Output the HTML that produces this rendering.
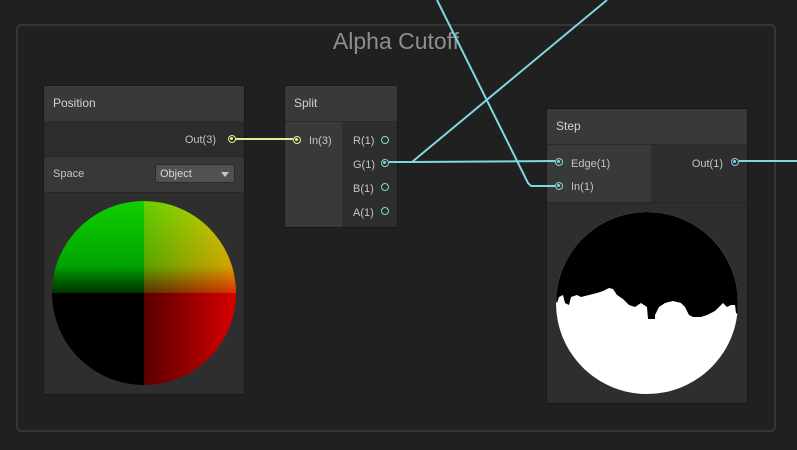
<!DOCTYPE html>
<html><head><style>
*{margin:0;padding:0;box-sizing:border-box}
body{width:797px;height:450px;background:#1f1f1f;position:relative;overflow:hidden;font-family:"Liberation Sans","DejaVu Sans",sans-serif;color:#c4c4c4;font-size:11px}
.abs{position:absolute}
.grp{left:16px;top:24px;width:760px;height:408px;border:2px solid #353535;border-radius:6px;background:#202020}
.title{left:16px;width:760px;top:28px;text-align:center;font-size:23px;color:#8e8e8e}
.hdr{background:#393939;border-bottom:1px solid #2a2a2a;font-size:12px;color:#d2d2d2;padding:10px 0 0 9px}
.port{width:8px;height:8px;border-radius:50%;border:1.5px solid #7fd8e0}
.pf::after{content:"";position:absolute;left:1px;top:1px;width:3px;height:3px;border-radius:50%;background:#7fd8e0}
.py{border-color:#e9ec94}.py::after{background:#e9ec94}
</style></head><body>
<div class="abs grp"></div>
<div class="abs title">Alpha Cutoff</div>

<div class="abs" style="left:44px;top:86px;width:200px;height:308px;background:#2e2e2e;box-shadow:0 0 0 1px #191919">
 <div class="abs hdr" style="left:0;top:0;width:200px;height:36px">Position</div>
 <div class="abs" style="left:0;top:36px;width:200px;height:34px;background:#2c2c2c"></div>
 <div class="abs" style="right:28px;top:48px">Out(3)</div>
 <div class="abs port pf py" style="left:184px;top:49px"></div>
 <div class="abs" style="left:0;top:70px;width:200px;height:37px;background:#383838;border-top:1px solid #262626;border-bottom:1px solid #262626"></div>
 <div class="abs" style="left:9px;top:82px">Space</div>
 <div class="abs" style="left:111px;top:78px;width:80px;height:19px;background:#515151;border-radius:3px;border:1px solid #2a2a2a;padding:3px 0 0 4px;color:#d8d8d8;font-size:11px">Object<span class="abs" style="right:5px;top:7px;width:0;height:0;border-left:4px solid transparent;border-right:4px solid transparent;border-top:5px solid #c8c8c8"></span></div>
 <svg class="abs" style="left:8px;top:115px" width="184" height="184">
  <defs>
   <clipPath id="c1"><circle cx="92" cy="92" r="92"/></clipPath>
   <linearGradient id="gr" x1="0" x2="1"><stop offset="0" stop-color="#580000"/><stop offset="1" stop-color="#d80000"/></linearGradient>
   <linearGradient id="gg" x1="0" x2="0" y1="0" y2="1"><stop offset="0" stop-color="#10d000"/><stop offset="0.7" stop-color="#00a400"/><stop offset="1" stop-color="#003000"/></linearGradient>
  </defs>
  <g clip-path="url(#c1)">
   <rect width="184" height="184" fill="#000"/>
   <rect x="92" y="0" width="92" height="184" fill="url(#gr)"/>
   <rect x="0" y="0" width="184" height="92" fill="url(#gg)" style="mix-blend-mode:screen"/>
  </g>
 </svg>
</div>

<div class="abs" style="left:285px;top:86px;width:112px;height:141px;background:#2e2e2e;box-shadow:0 0 0 1px #191919">
 <div class="abs hdr" style="left:0;top:0;width:112px;height:36px">Split</div>
 <div class="abs" style="left:0;top:36px;width:57px;height:105px;background:#393939"></div>
 <div class="abs port pf py" style="left:8px;top:50px"></div>
 <div class="abs" style="left:24px;top:49px">In(3)</div>
 <div class="abs" style="left:68px;top:49px">R(1)</div>
 <div class="abs" style="left:68px;top:73px">G(1)</div>
 <div class="abs" style="left:68px;top:97px">B(1)</div>
 <div class="abs" style="left:68px;top:121px">A(1)</div>
 <div class="abs port" style="left:96px;top:50px"></div>
 <div class="abs port pf" style="left:96px;top:73px"></div>
 <div class="abs port" style="left:96px;top:97px"></div>
 <div class="abs port" style="left:96px;top:121px"></div>
</div>

<div class="abs" style="left:547px;top:109px;width:200px;height:294px;background:#2e2e2e;box-shadow:0 0 0 1px #191919">
 <div class="abs hdr" style="left:0;top:0;width:200px;height:36px">Step</div>
 <div class="abs" style="left:0;top:36px;width:104px;height:57px;background:#393939"></div>
 <div class="abs" style="left:0;top:93px;width:200px;height:1px;background:#262626"></div>
 <div class="abs port pf" style="left:8px;top:49px"></div>
 <div class="abs port pf" style="left:8px;top:73px"></div>
 <div class="abs" style="left:24px;top:49px">Edge(1)</div>
 <div class="abs" style="left:24px;top:72px">In(1)</div>
 <div class="abs" style="right:24px;top:49px">Out(1)</div>
 <div class="abs port pf" style="left:184px;top:49px"></div>
 <svg class="abs" style="left:8px;top:102px" width="184" height="184">
  <defs><clipPath id="c2"><circle cx="92" cy="92" r="91"/></clipPath></defs>
  <g clip-path="url(#c2)">
   <rect width="184" height="184" fill="#fff"/>
   <polygon fill="#000" points="0,0 184,0 184,104 181,102 180,94 176,94 172,96 168,92 164,96 160,100 152,104 146,106 138,106 134,104 130,96 126,92 118,90 110,92 104,96 100,104 100,108 93,108 92,96 86,92 80,96 74,94 68,88 62,84 58,78 54,77 48,80 42,82 34,84 26,86 22,84 16,86 14,94 10,92 8,84 4,86 2,92 0,89"/>
  </g>
 </svg>
</div>

<svg class="abs" style="left:0;top:0" width="797" height="450">
 <line x1="236" y1="139" x2="293" y2="139" stroke="#e9ec94" stroke-width="2"/>
 <g stroke="#7fd8e0" stroke-width="2" fill="none">
  <polyline points="389,162 412,162 607,0"/>
  <line x1="412" y1="162" x2="555" y2="161"/>
  <polyline points="437,0 528,183 531,186 555,186"/>
  <line x1="739" y1="161" x2="797" y2="161"/>
 </g>
</svg>
</body></html>
